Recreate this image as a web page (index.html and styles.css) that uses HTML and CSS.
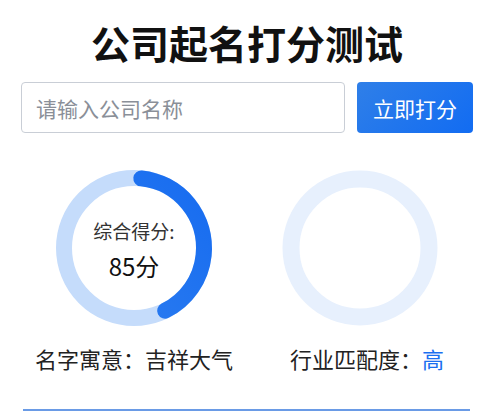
FILE: index.html
```html
<!DOCTYPE html>
<html>
<head>
<meta charset="utf8">
<meta name="viewport" content="width=device-width, initial-scale=1.0">
<title>公司起名打分测试</title>
<link rel="stylesheet" href="styles.css">
</head>
<body>
<div class="page">
	<h1 class="title">公司起名打分测试</h1>

	<div class="search">
		<input class="search-input" type="text" placeholder="请输入公司名称">
		<button class="search-btn">立即打分</button>
	</div>

	<div class="result">
		<div class="result-item">
			<div class="ring">
				<svg width="160" height="160" viewBox="0 0 160 160">
					<defs>
						<linearGradient id="prog" x1="0" y1="0" x2="1" y2="1">
							<stop offset="0" stop-color="#2f7ff0"/>
							<stop offset="1" stop-color="#176cf0"/>
						</linearGradient>
					</defs>
					<circle cx="80" cy="80" r="70" fill="none" stroke="#c5dcfb" stroke-width="16"/>
					<circle cx="80" cy="80" r="70" fill="none" stroke="url(#prog)" stroke-width="16"
						stroke-linecap="round" pathLength="100" stroke-dasharray="41 100"
						transform="rotate(-84 80 80)"/>
				</svg>
				<div class="ring-text">
					<div class="ring-label">综合得分:</div>
					<div class="ring-score">85分</div>
				</div>
			</div>
			<div class="result-label">名字寓意：吉祥大气</div>
		</div>
		<div class="result-item">
			<div class="ring">
				<svg width="160" height="160" viewBox="0 0 160 160">
					<circle cx="80" cy="80" r="69" fill="none" stroke="#e7f0fd" stroke-width="17"/>
				</svg>
			</div>
			<div class="result-label">行业匹配度：<span class="hl">高</span></div>
		</div>
	</div>

	<div class="divider"></div>
</div>
</body>
</html>
```

FILE: styles.css
```css
body{
margin:0;
background:#fff;
color:#222;
font-family:"Noto Sans CJK SC", "Noto Sans", sans-serif;
}
.page{
padding:19px 20px 0 21px;
}
.title{
margin:0;
text-align:center;
font-size:39px;
line-height:46px;
font-weight:700;
color:#111;
}
.search{
display:flex;
gap:12px;
margin-top:17px;
height:51px;
}
.search-input{
flex:1;
box-sizing:border-box;
height:51px;
border:1px solid #c9ced6;
border-radius:4px;
padding:0 14px;
font-family:inherit;
font-size:21px;
color:#333;
outline:none;
}
.search-input::placeholder{
color:#8a8f98;
}
.search-btn{
width:116px;
height:51px;
border:none;
border-radius:4px;
background:linear-gradient(135deg, #2f7fe8, #126cf2);
color:#fff;
font-family:inherit;
font-size:21px;
}
.result{
display:grid;
grid-template-columns:1fr 1fr;
margin-top:35px;
}
.result-item{
display:flex;
flex-direction:column;
align-items:center;
}
.ring{
position:relative;
width:160px;
height:160px;
}
.ring svg{
display:block;
}
.ring-text{
position:absolute;
left:0;
top:0;
right:0;
bottom:0;
display:flex;
flex-direction:column;
align-items:center;
justify-content:center;
padding-top:4px;
}
.ring-label{
font-size:19px;
line-height:24px;
color:#333;
}
.ring-score{
font-size:24px;
line-height:30px;
margin-top:8px;
color:#111;
}
.result-label{
margin-top:15px;
font-size:22px;
line-height:30px;
color:#222;
}
.result-item:last-child .result-label{
padding-left:14px;
}
.hl{
color:#1a6ff0;
}
.divider{
margin:36px 3px 0 2px;
border-top:2px solid #6a9be6;
}
```
